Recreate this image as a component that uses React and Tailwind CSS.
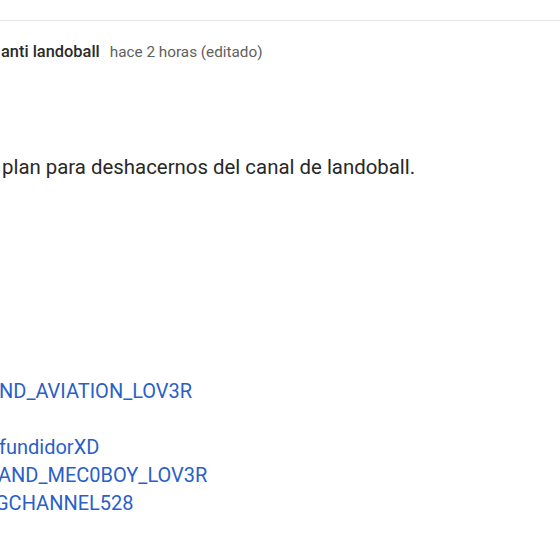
import React from 'react';

const links = [
  { text: 'ND_AVIATION_LOV3R', offset: 'ml-[-1px]' },
  null,
  { text: 'fundidorXD', offset: 'ml-[-1px]' },
  { text: 'AND_MEC0BOY_LOV3R', offset: 'ml-[-2px]' },
  { text: 'GCHANNEL528', offset: 'ml-[-5px]' },
];

export default function App() {
  return (
    <div className="w-[560px] h-[560px] overflow-hidden bg-white font-['Roboto',sans-serif]">
      {/* Divider */}
      <div className="h-[21px] border-b border-[#e5e5e5]" />

      {/* Comment header */}
      <div className="mt-[21px] flex items-center gap-[10px] h-5 leading-5 whitespace-nowrap">
        <span className="text-[16.4px] font-medium text-[#2b2b2b] ml-[1px]">anti landoball</span>
        <span className="text-[15.3px] text-[#606060]">hace 2 horas (editado)</span>
      </div>

      {/* Comment body */}
      <p className="mt-[91px] text-[20.4px] leading-[28px] text-[#282828] whitespace-nowrap ml-[2px]">
        plan para deshacernos del canal de landoball.
      </p>

      {/* Mentions */}
      <div className="mt-[196px] text-[20px] leading-[28px] text-[#2a5fc8] whitespace-nowrap">
        {links.map((l, i) =>
          l ? (
            <div key={i} className={l.offset}>{l.text}</div>
          ) : (
            <div key={i} className="h-[28px]" />
          )
        )}
      </div>
    </div>
  );
}
